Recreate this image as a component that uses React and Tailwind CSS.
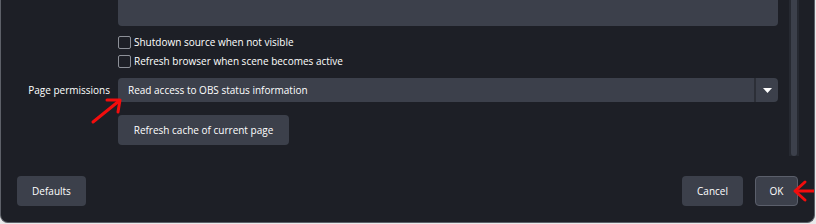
import React from 'react';

function Checkbox({ label }) {
  return (
    <label className="flex h-[19px] items-center gap-[3px]">
      <span className="h-[13px] w-[13px] rounded-[2px] border border-[#8d9098]" />
      <span>{label}</span>
    </label>
  );
}

function Button({ children, className = '' }) {
  return (
    <button className={`h-[30px] rounded-[4px] bg-[#3c404b] text-white ${className}`}>
      {children}
    </button>
  );
}

export default function App() {
  return (
    <div className="h-[224px] w-[816px] bg-[#e9e9ea]">
      <div
        className="relative flex h-[223px] w-[815px] flex-col overflow-hidden rounded-b-[8px] border-x border-b border-[#5d6068] bg-[#1d1f26] text-[10px] font-medium text-white"
        style={{ fontFamily: '"Open Sans", "Noto Sans", sans-serif' }}
      >
        <div className="flex h-[156px]">
          <div className="grid w-[777px] grid-cols-[109px_1fr] content-start gap-x-2">
            <div />
            <div className="h-[26px] rounded-b-[4px] bg-[#3c404b]" />

            <div />
            <div className="mt-[7px] flex flex-col">
              <Checkbox label="Shutdown source when not visible" />
              <Checkbox label="Refresh browser when scene becomes active" />
            </div>

            <div className="mt-[7px] flex items-center justify-end">Page permissions</div>
            <div className="mt-[7px] flex h-[24px] items-center rounded-[4px] bg-[#3c404b]">
              <span className="flex-1 pl-[10px]">Read access to OBS status information</span>
              <span className="h-full w-[2px] bg-[#2c2f37]" />
              <span className="flex w-[22px] justify-center">
                <svg width="9" height="5" viewBox="0 0 9 5">
                  <path d="M0 0H9L4.5 5Z" fill="#fff" />
                </svg>
              </span>
            </div>

            <div />
            <div className="mt-[13px]">
              <Button className="w-[171px]">Refresh cache of current page</Button>
            </div>
          </div>
          <div className="ml-[11px] flex w-[10px] justify-center bg-[#262931]">
            <div className="h-full w-[6px] rounded-b-[3px] bg-[#3c404b]" />
          </div>
        </div>

        <div className="mt-[20px] flex items-center px-[16px]">
          <Button className="w-[69px]">Defaults</Button>
          <div className="flex-1" />
          <Button className="w-[61px]">Cancel</Button>
          <Button className="ml-[12px] w-[43px] border border-[#5b5f6b]">OK</Button>
        </div>

        <svg
          className="pointer-events-none absolute left-0 top-0"
          width="815"
          height="223"
          viewBox="0 0 815 223"
        >
          <g stroke="#f20d0d" strokeWidth="3" fill="none" strokeLinecap="round" strokeLinejoin="round">
            <path d="M92 122L118 101" />
            <path d="M106 100L119 100L117 112" />
            <path d="M815 191L795 191" />
            <path d="M804 182L794 191L804 200" />
          </g>
        </svg>
      </div>
    </div>
  );
}
